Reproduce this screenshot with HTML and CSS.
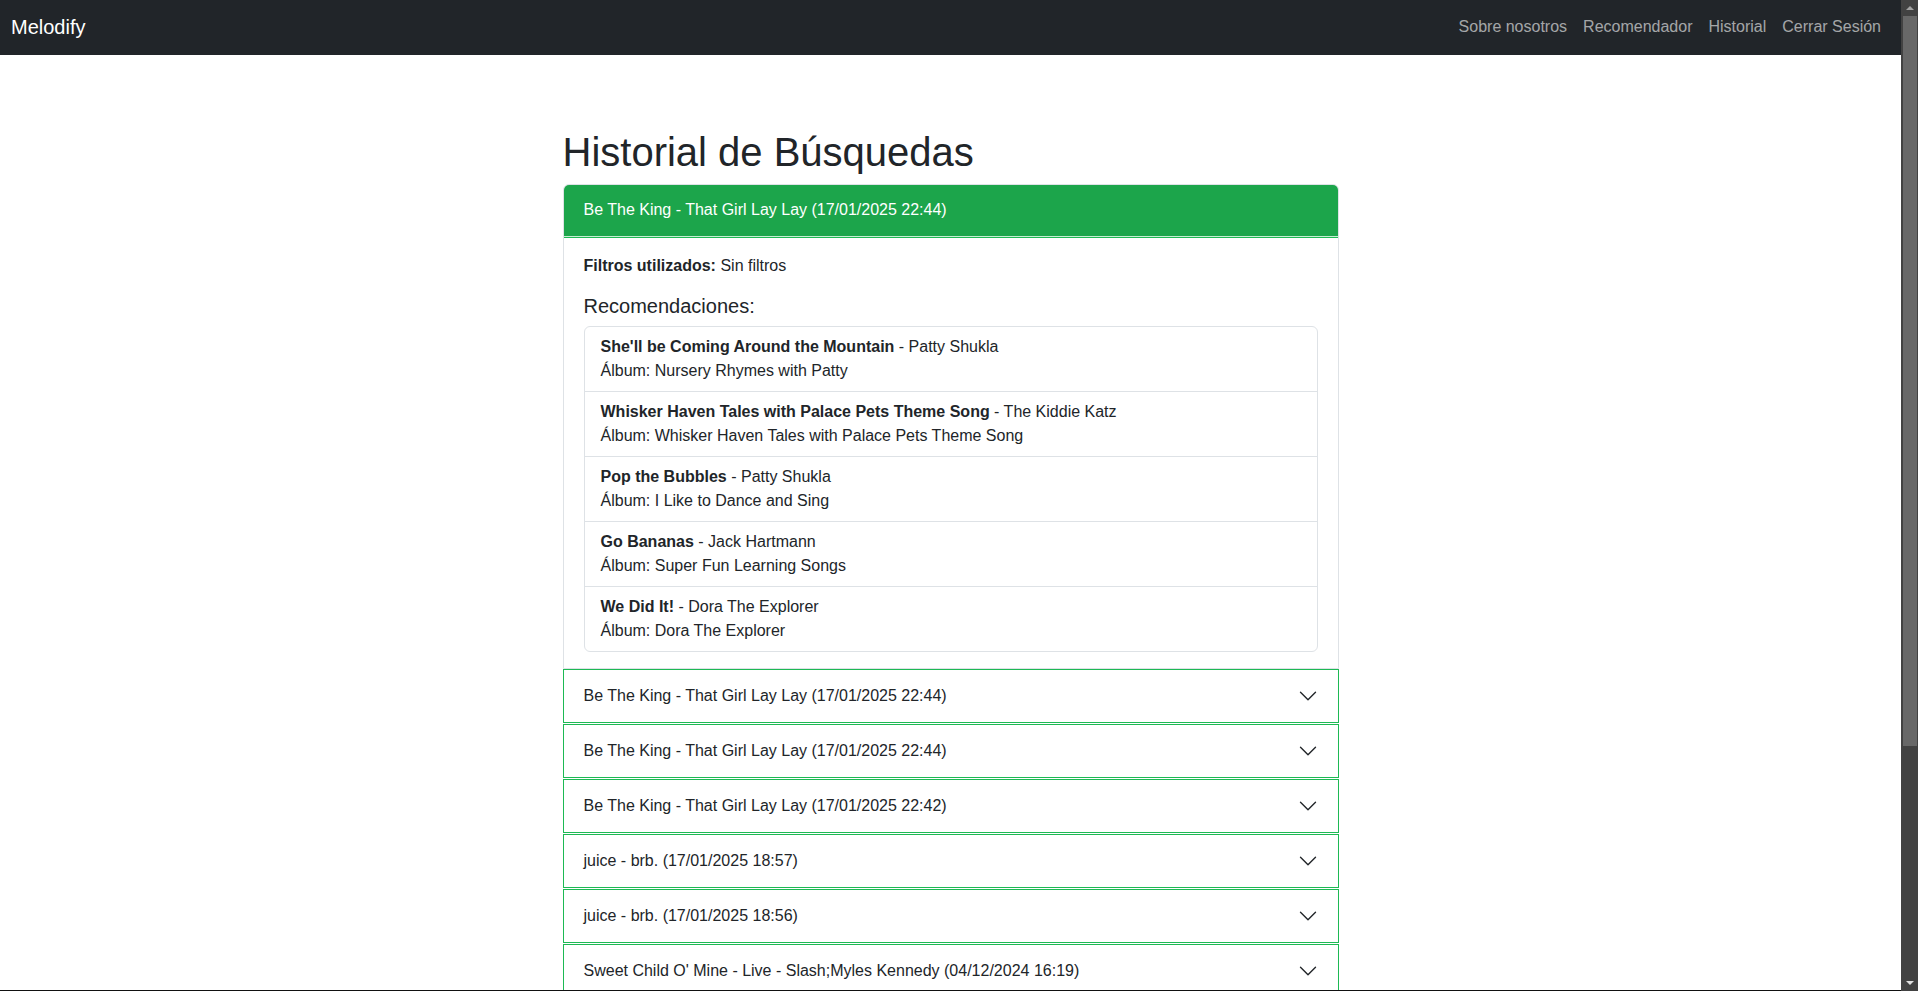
FILE: index.html
```html
<!DOCTYPE html>
<html lang="es">
<head>
<meta charset="utf-8">
<title>Melodify - Historial</title>
<link rel="stylesheet" href="styles.css">
</head>
<body>
<div class="page">
<nav class="navbar">
  <a class="brand" href="#">Melodify</a>
  <ul class="nav">
    <li><a class="nav-link" href="#">Sobre nosotros</a></li>
    <li><a class="nav-link" href="#">Recomendador</a></li>
    <li><a class="nav-link" href="#">Historial</a></li>
    <li><a class="nav-link" href="#">Cerrar Sesión</a></li>
  </ul>
</nav>
<main class="container">
  <h1 class="title">Historial de Búsquedas</h1>
  <div class="accordion">
    <div class="item item-open">
      <div class="item-header open">Be The King - That Girl Lay Lay (17/01/2025 22:44)</div>
      <div class="item-body">
        <p class="filters"><strong>Filtros utilizados:</strong> Sin filtros</p>
        <h5 class="rec-title">Recomendaciones:</h5>
        <ul class="list">
          <li class="list-item"><div><strong>She'll be Coming Around the Mountain</strong> - Patty Shukla</div><div>Álbum: Nursery Rhymes with Patty</div></li>
          <li class="list-item"><div><strong>Whisker Haven Tales with Palace Pets Theme Song</strong> - The Kiddie Katz</div><div>Álbum: Whisker Haven Tales with Palace Pets Theme Song</div></li>
          <li class="list-item"><div><strong>Pop the Bubbles</strong> - Patty Shukla</div><div>Álbum: I Like to Dance and Sing</div></li>
          <li class="list-item"><div><strong>Go Bananas</strong> - Jack Hartmann</div><div>Álbum: Super Fun Learning Songs</div></li>
          <li class="list-item"><div><strong>We Did It!</strong> - Dora The Explorer</div><div>Álbum: Dora The Explorer</div></li>
        </ul>
      </div>
    </div>
    <div class="item item-closed"><div class="item-header"><span>Be The King - That Girl Lay Lay (17/01/2025 22:44)</span><svg class="chev" viewBox="0 0 16 16"><path d="M2 5L8 11L14 5"/></svg></div></div>
    <div class="item item-closed"><div class="item-header"><span>Be The King - That Girl Lay Lay (17/01/2025 22:44)</span><svg class="chev" viewBox="0 0 16 16"><path d="M2 5L8 11L14 5"/></svg></div></div>
    <div class="item item-closed"><div class="item-header"><span>Be The King - That Girl Lay Lay (17/01/2025 22:42)</span><svg class="chev" viewBox="0 0 16 16"><path d="M2 5L8 11L14 5"/></svg></div></div>
    <div class="item item-closed"><div class="item-header"><span>juice - brb. (17/01/2025 18:57)</span><svg class="chev" viewBox="0 0 16 16"><path d="M2 5L8 11L14 5"/></svg></div></div>
    <div class="item item-closed"><div class="item-header"><span>juice - brb. (17/01/2025 18:56)</span><svg class="chev" viewBox="0 0 16 16"><path d="M2 5L8 11L14 5"/></svg></div></div>
    <div class="item item-closed"><div class="item-header"><span>Sweet Child O' Mine - Live - Slash;Myles Kennedy (04/12/2024 16:19)</span><svg class="chev" viewBox="0 0 16 16"><path d="M2 5L8 11L14 5"/></svg></div></div>
  </div>
</main>
</div>
<div class="fake-scrollbar" aria-hidden="true">
  <div class="sb-arrow sb-up"></div>
  <div class="sb-track"><div class="sb-thumb"></div></div>
  <div class="sb-arrow sb-down"></div>
</div>
<div class="window-edge" aria-hidden="true"></div>
</body>
</html>
```
FILE: styles.css
```css
* { box-sizing: border-box; }
body {
  margin: 0;
  font-family: "Liberation Sans", Arial, sans-serif;
  font-size: 16px;
  line-height: 1.5;
  color: #212529;
  background: #fff;
}
a { text-decoration: none; }
.page { margin-right: 17px; }

.navbar {
  height: 55px;
  background: #212529;
  display: flex;
  align-items: center;
  justify-content: space-between;
  padding: 0 12px 1px 11px;
}
.brand { color: #fff; font-size: 20px; line-height: 30px; }
.nav { display: flex; list-style: none; margin: 0; padding: 0; }
.nav-link { display: block; padding: 8px 8px; color: rgba(255,255,255,0.6); font-size: 16px; }

.container {
  max-width: 800px;
  margin: 0 auto;
  padding: 73px 12px 310px;
}
.title {
  font-size: 40px;
  line-height: 1.2;
  margin: 0 0 8px;
  font-weight: normal;
}
.accordion { display: flex; flex-direction: column; }
.item-open {
  border: 1px solid #dee2e6;
  border-radius: 6px 6px 0 0;
  overflow: hidden;
}
.item-header {
  display: flex;
  align-items: center;
  justify-content: space-between;
  height: 52px;
  padding: 0 20px;
  font-size: 16px;
}
.item-header.open {
  background: #1ca54b;
  color: #fff;
  height: 53px;
  margin: -1px -1px 0;
  padding: 0 21px;
  border-bottom: 1px solid #c7eed3;
  box-shadow: 0 1px 0 #1db954;
}
.item-body { padding: 17px 20px 16px; }
.filters { margin: 0 0 16px; }
.rec-title { font-size: 20px; font-weight: normal; line-height: 1.2; margin: 0 0 8px; }
.list {
  list-style: none;
  margin: 0;
  padding: 0;
  border: 1px solid #dee2e6;
  border-radius: 6px;
}
.list-item {
  padding: 8px 16px;
  border-top: 1px solid #dee2e6;
}
.list-item:first-child { border-top: 0; }
.item-closed {
  border: 1px solid #1db954;
  margin-bottom: 1px;
}
.chev {
  width: 20px;
  height: 20px;
  fill: none;
  stroke: #212529;
  stroke-width: 1.1;
  stroke-linecap: round;
  stroke-linejoin: round;
}

/* browser chrome imitation */
.fake-scrollbar {
  position: fixed;
  top: 0;
  right: 0;
  width: 17px;
  height: 100vh;
  background: #424242;
  display: flex;
  flex-direction: column;
}
.sb-arrow {
  height: 16px;
  display: flex;
  align-items: center;
  justify-content: center;
}
.sb-arrow::before {
  content: "";
  width: 0;
  height: 0;
  border-left: 4px solid transparent;
  border-right: 4px solid transparent;
}
.sb-up::before { border-bottom: 4px solid #a3a3a3; }
.sb-down::before { border-top: 4px solid #e0e0e0; }
.sb-track { flex: 1; padding: 0 1px 0 2px; }
.sb-thumb { height: 730px; background: #686868; }
.window-edge {
  position: fixed;
  left: 0;
  right: 17px;
  bottom: 0;
  height: 1px;
  background: #111;
}
```
